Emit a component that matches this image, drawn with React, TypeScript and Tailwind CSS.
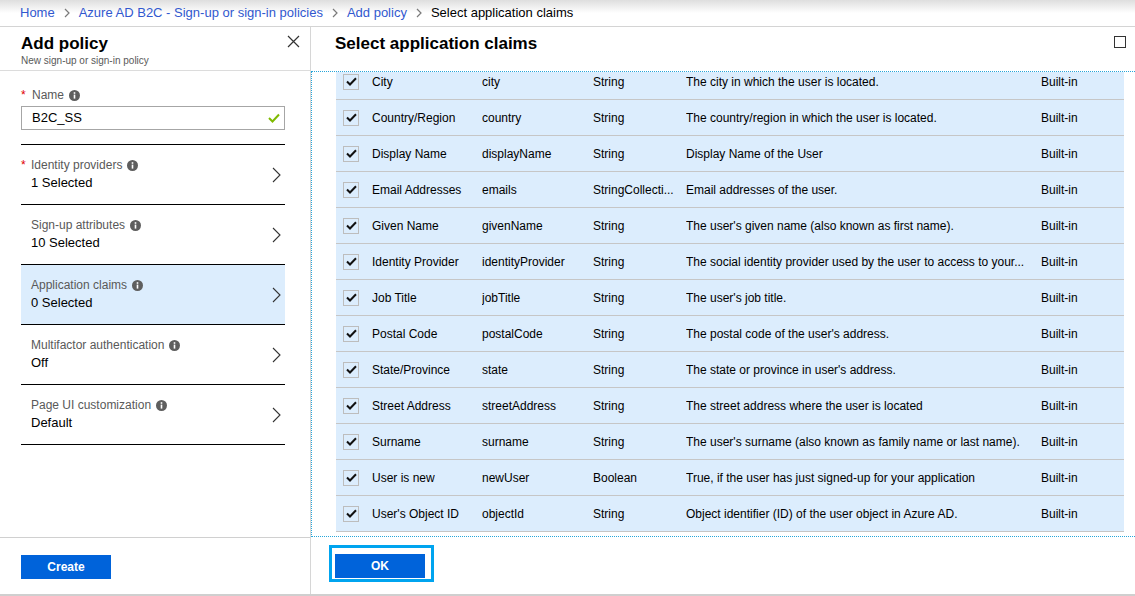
import React from "react"

const font = { fontFamily: '"Liberation Sans", Arial, sans-serif' }

function Chevron({ className = "" }: { className?: string }) {
  return (
    <svg width="6" height="10" viewBox="0 0 6 10" className={className}>
      <path d="M1 1l4 4-4 4" fill="none" stroke="#7a7a7a" strokeWidth="1.2" />
    </svg>
  )
}

function Info() {
  return (
    <svg width="11" height="11" viewBox="0 0 11 11" className="inline-block ml-[5px] mt-[3px]">
      <circle cx="5.5" cy="5.5" r="5.5" fill="#5e5e5e" />
      <rect x="4.7" y="4.6" width="1.6" height="4" fill="#fff" />
      <rect x="4.7" y="2.2" width="1.6" height="1.6" fill="#fff" />
    </svg>
  )
}

const items = [
  { label: "Identity providers", value: "1 Selected", required: true },
  { label: "Sign-up attributes", value: "10 Selected" },
  { label: "Application claims", value: "0 Selected", active: true },
  { label: "Multifactor authentication", value: "Off" },
  { label: "Page UI customization", value: "Default" },
]

const claims = [
  ["City", "city", "String", "The city in which the user is located."],
  ["Country/Region", "country", "String", "The country/region in which the user is located."],
  ["Display Name", "displayName", "String", "Display Name of the User"],
  ["Email Addresses", "emails", "StringCollecti...", "Email addresses of the user."],
  ["Given Name", "givenName", "String", "The user's given name (also known as first name)."],
  ["Identity Provider", "identityProvider", "String", "The social identity provider used by the user to access to your..."],
  ["Job Title", "jobTitle", "String", "The user's job title."],
  ["Postal Code", "postalCode", "String", "The postal code of the user's address."],
  ["State/Province", "state", "String", "The state or province in user's address."],
  ["Street Address", "streetAddress", "String", "The street address where the user is located"],
  ["Surname", "surname", "String", "The user's surname (also known as family name or last name)."],
  ["User is new", "newUser", "Boolean", "True, if the user has just signed-up for your application"],
  ["User's Object ID", "objectId", "String", "Object identifier (ID) of the user object in Azure AD."],
]

export default function App() {
  return (
    <div className="w-[1135px] h-[596px] flex flex-col bg-white text-black overflow-hidden" style={font}>
      {/* breadcrumb */}
      <div className="h-[27px] shrink-0 flex items-center pl-[20px] text-[13px] border-b border-[#d4d4d4] bg-gradient-to-b from-[#dedede] via-white to-white">
        <span className="text-[#3158cf]">Home</span>
        <Chevron className="mx-[9px]" />
        <span className="text-[#3158cf]">Azure AD B2C - Sign-up or sign-in policies</span>
        <Chevron className="mx-[9px]" />
        <span className="text-[#3158cf]">Add policy</span>
        <Chevron className="mx-[9px]" />
        <span>Select application claims</span>
      </div>

      <div className="flex-1 flex border-b-2 border-[#cfcfcf]">
        {/* left blade */}
        <div className="w-[311px] shrink-0 flex flex-col border-r border-[#d6d6d6]">
          <div className="h-[44px] shrink-0 border-b border-[#dcdcdc] flex justify-between pl-[21px] pr-[10px]">
            <div className="pt-[6px]">
              <div className="text-[17px] font-bold leading-[22px]">Add policy</div>
              <div className="text-[10px] text-[#595959] leading-[12px]">New sign-up or sign-in policy</div>
            </div>
            <svg width="13" height="13" viewBox="0 0 13 13" className="mt-[8px]">
              <path d="M1 1l11 11M12 1L1 12" stroke="#333" strokeWidth="1.2" />
            </svg>
          </div>
          <div className="flex-1 pl-[21px] pr-[25px] pt-[16px]">
            <div className="flex text-[12px] leading-[16px] text-[#595959]">
              <span className="w-[11px] text-[#e00000]">*</span>
              <span>Name</span>
              <Info />
            </div>
            <div className="mt-[3px] h-[24px] border border-[#a6a6a6] flex items-center justify-between pl-[10px] pr-[4px] text-[13px]">
              <span>B2C_SS</span>
              <svg width="12" height="10" viewBox="0 0 12 10">
                <path d="M1 5l3.5 3.5L11 1.5" fill="none" stroke="#7fba00" strokeWidth="2" />
              </svg>
            </div>
            <div className="mt-[14px] border-t border-black">
              {items.map((it) => (
                <div
                  key={it.label}
                  className={`h-[60px] border-b border-black flex items-center justify-between pr-[4px] ${it.active ? "bg-[#dcedfd]" : ""}`}
                >
                  <div>
                    <div className="flex text-[12px] leading-[16px] text-[#595959]">
                      <span className="w-[10px] text-[#e00000]">{it.required ? "*" : ""}</span>
                      <span>{it.label}</span>
                      <Info />
                    </div>
                    <div className="pl-[10px] text-[13px] leading-[20px]">{it.value}</div>
                  </div>
                  <svg width="9" height="16" viewBox="0 0 9 16">
                    <path d="M1 1l7 7-7 7" fill="none" stroke="#333" strokeWidth="1.1" />
                  </svg>
                </div>
              ))}
            </div>
          </div>
          <div className="h-[57px] shrink-0 border-t border-[#d0d0d0] pl-[21px] pt-[16px]">
            <button className="w-[90px] h-[24px] bg-[#0063da] text-white text-[12px] font-bold">Create</button>
          </div>
        </div>

        {/* right blade */}
        <div className="flex-1 flex flex-col">
          <div className="h-[44px] shrink-0 flex justify-between pl-[24px] pr-[9px]">
            <div className="pt-[6px] text-[17px] font-bold leading-[22px]">Select application claims</div>
            <div className="mt-[9px] w-[12px] h-[12px] border-[1.5px] border-[#333]" />
          </div>
          <div className="flex-1 border-t border-l border-b border-dotted border-[#27a6da] overflow-hidden pl-[24px] pr-[11px]">
            <div className="-mt-[8px]">
              {claims.map(([name, claim, type, desc]) => (
                <div
                  key={claim}
                  className="h-[36px] flex items-center bg-[#dcedfd] border-b border-[#c6c6c6] text-[12px] whitespace-nowrap"
                >
                  <div className="w-[36px] shrink-0 pl-[7px]">
                    <div className="w-[16px] h-[16px] border border-[#bdbdbd] flex items-center justify-center">
                      <svg width="11" height="9" viewBox="0 0 11 9">
                        <path d="M1 4.5l3 3L10 1.2" fill="none" stroke="#111" strokeWidth="2" />
                      </svg>
                    </div>
                  </div>
                  <div className="w-[110px] shrink-0 overflow-hidden">{name}</div>
                  <div className="w-[111px] shrink-0 overflow-hidden">{claim}</div>
                  <div className="w-[93px] shrink-0 overflow-hidden">{type}</div>
                  <div className="w-[355px] shrink-0 overflow-hidden">{desc}</div>
                  <div>Built-in</div>
                </div>
              ))}
            </div>
          </div>
          <div className="h-[57px] shrink-0 pl-[18px] pt-[8px]">
            <div className="w-[105px] h-[37px] border-[3px] border-[#00a4ef] pl-[3px] pt-[5px]">
              <button className="w-[90px] h-[24px] bg-[#0063da] text-white text-[12px] font-bold">OK</button>
            </div>
          </div>
        </div>
      </div>
    </div>
  )
}
